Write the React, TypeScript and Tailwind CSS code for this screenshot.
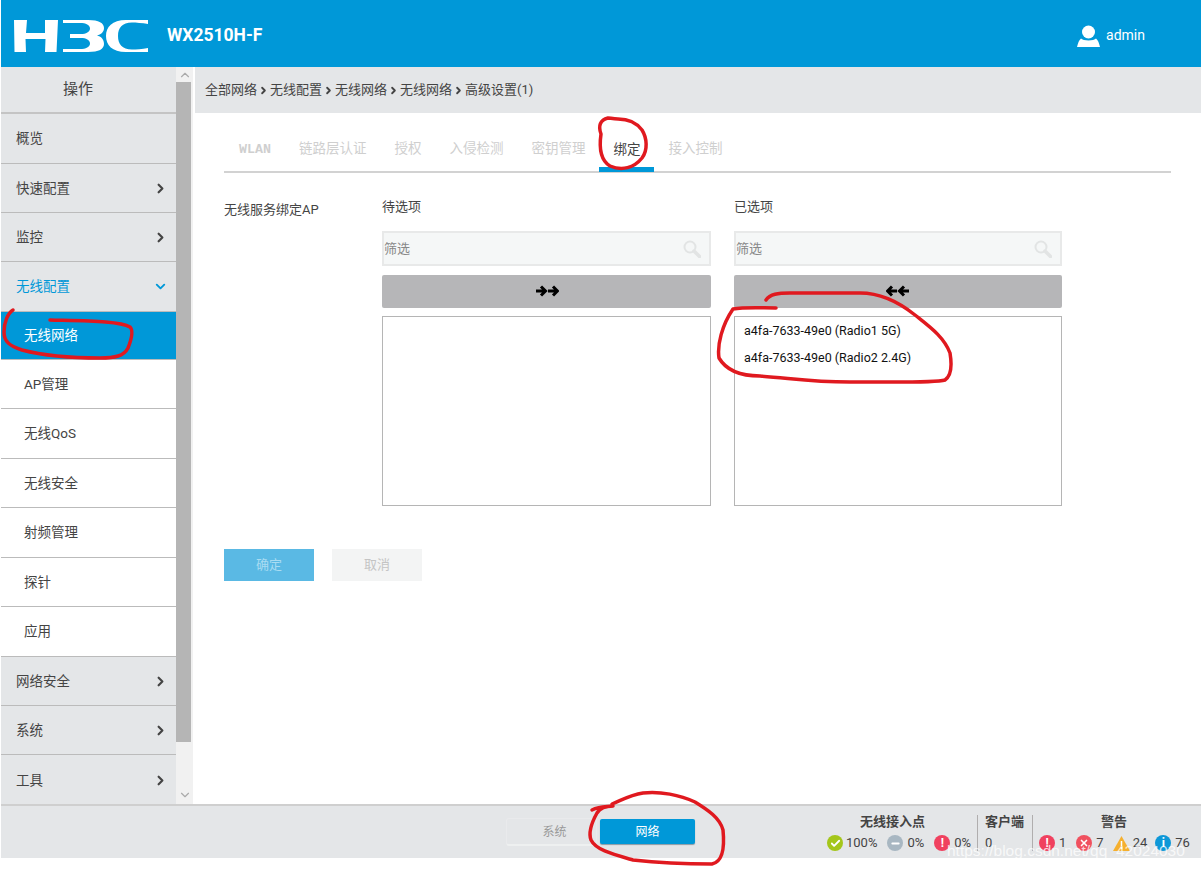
import React from "react";
import { ChevronRight, ChevronDown, ChevronUp, Check, Minus, X } from "lucide-react";

const FONT = "font-['Roboto','Noto_Sans_CJK_SC',sans-serif]";

interface MenuItem {
    label: string;
    kind: "group" | "open" | "sub" | "active";
    h: string;
}

const menu: MenuItem[] = [
    { label: "概览", kind: "group", h: "h-[50px]" },
    { label: "快速配置", kind: "group", h: "h-[49px]" },
    { label: "监控", kind: "group", h: "h-[49px]" },
    { label: "无线配置", kind: "open", h: "h-[50px]" },
    { label: "无线网络", kind: "active", h: "h-[48px]" },
    { label: "AP管理", kind: "sub", h: "h-[49px]" },
    { label: "无线QoS", kind: "sub", h: "h-[50px]" },
    { label: "无线安全", kind: "sub", h: "h-[49px]" },
    { label: "射频管理", kind: "sub", h: "h-[50px]" },
    { label: "探针", kind: "sub", h: "h-[49px]" },
    { label: "应用", kind: "sub", h: "h-[50px]" },
    { label: "网络安全", kind: "group", h: "h-[49px]" },
    { label: "系统", kind: "group", h: "h-[49px]" },
    { label: "工具", kind: "group", h: "h-[52px]" },
];

const tabs = ["WLAN", "链路层认证", "授权", "入侵检测", "密钥管理"];

const Logo = () => (
    <svg width="135" height="34" viewBox="0 0 135 34" className="shrink-0">
        <path fill="#fff" d="M0 1h13l-1 13h19V1h13l-1.500 32H31l.5-13h-20l.5 13H0.500z" />
        <path
            fill="#fff"
            d="M49 1H74C85 1 90 4 90 9C90 13 87 15.500 83 16.500C87 17.500 90 20 90 25C90 30 85 33 74 33H49V30H66C72 30 76 28 76 24.500C76 21 72 19 67 19H56V15H67C72 15 76 13 76 9.500C76 6 72 4 66 4H49Z"
        />
        <path
            fill="#fff"
            d="M134 1H112C98 1 92 8 92 17C92 26 98 33 112 33H134V29C128 30 122 30.500 118 30.500C108 30.500 104 25 104 17C104 9 108 3.500 118 3.500C122 3.500 128 4 134 5Z"
        />
    </svg>
);

const Sidebar = () => (
    <div className="flex h-full w-[194px] shrink-0 bg-[#f1f1f1]">
        <div className="flex w-[175px] shrink-0 flex-col">
            <div className="flex h-[47px] shrink-0 items-center justify-center border-b-2 border-[#c4c4c4] bg-[#e4e6e8] pr-[21px] text-[15px] text-[#444]">
                操作
            </div>
            {menu.map((m) => {
                const base = `flex ${m.h} shrink-0 items-center border-b text-[13.5px] `;
                if (m.kind === "active") {
                    return (
                        <div key={m.label} className={base + "border-[#bbb] bg-[#0098d8] pl-[23px] text-white"}>
                            {m.label}
                        </div>
                    );
                }
                if (m.kind === "sub") {
                    return (
                        <div key={m.label} className={base + "border-[#bbb] bg-white pl-[23px] text-[#444]"}>
                            {m.label}
                        </div>
                    );
                }
                return (
                    <div
                        key={m.label}
                        className={
                            base +
                            "justify-between border-[#bbb] bg-[#e4e6e8] pl-[15px] pr-[8px] " +
                            (m.kind === "open" ? "text-[#0098d8]" : "text-[#444]")
                        }
                    >
                        {m.label}
                        {m.kind === "open" && <ChevronDown size={15} strokeWidth={3} className="text-[#0098d8]" />}
                        {m.kind === "group" && m.label !== "概览" && (
                            <ChevronRight size={15} strokeWidth={3.500} className="text-[#444]" />
                        )}
                    </div>
                );
            })}
        </div>
        <div className="flex w-[17px] shrink-0 flex-col items-center">
            <div className="flex h-[15px] w-full items-center justify-center">
                <ChevronUp size={14} className="text-[#aaa]" />
            </div>
            <div className="h-[660px] w-[15px] self-start bg-[#b5b5b5]" />
            <div className="flex flex-1 items-end pb-[2px]">
                <ChevronDown size={14} className="text-[#aaa]" />
            </div>
        </div>
        <div className="w-[2px] shrink-0 bg-white" />
    </div>
);

const ArrowPair = ({ left }: { left?: boolean }) => (
    <svg width="24" height="12" viewBox="0 0 24 12" className={`mb-[2px] ${left ? "rotate-180" : ""}`}>
        <path d="M1 6h8M6 1.500l4.500 4.500-4.500 4.500M13 6h8M18 1.500l4.500 4.500-4.500 4.500" fill="none" stroke="#000" strokeWidth="3" />
    </svg>
);

const Magnifier = () => (
    <svg width="18" height="18" viewBox="0 0 18 18" fill="none" stroke="#e2e4e4">
        <circle cx="7" cy="7" r="5.500" strokeWidth="2" />
        <path d="M11 11l5.500 5.500" strokeWidth="3.500" strokeLinecap="round" />
    </svg>
);

const Picker = ({ title, left, items, w }: { title: string; left?: boolean; items: string[]; w: string }) => (
    <div className={`flex ${w} flex-col`}>
        <div className="h-[33px] text-[13px] leading-[18px] text-[#444]">{title}</div>
        <div className="flex h-[35px] items-center justify-between border-2 border-[#e8e9e9] bg-[#f5f7f7] pr-2 text-[13px] text-[#888]">
            筛选
            <Magnifier />
        </div>
        <div className="mt-[9px] flex h-[33px] items-center justify-center rounded-[2px] bg-[#b6b6b8]">
            <ArrowPair left={left} />
        </div>
        <div className="mt-[8px] h-[190px] border border-[#b5b5b5] bg-white px-[9px] pt-[4px] text-[12.5px] text-[#111]">
            {items.map((t) => (
                <div key={t} className="h-[27px] leading-[20px]">
                    {t}
                </div>
            ))}
        </div>
    </div>
);

const Main = () => (
    <div className="flex min-w-0 flex-1 flex-col bg-white">
        <div className="flex h-[46px] shrink-0 items-center gap-[1px] bg-[#e4e6e8] pl-[10px] text-[13px] text-[#444]">
            {["全部网络", "无线配置", "无线网络", "无线网络"].map((c, i) => (
                <React.Fragment key={i}>
                    {c}
                    <ChevronRight size={11} strokeWidth={4} className="text-[#444]" />
                </React.Fragment>
            ))}
            高级设置(1)
        </div>
        <div className="ml-[29px] flex h-[60px] w-[947px] shrink-0 items-end border-b-2 border-[#d2d2d2] text-[13.5px] text-[#cfcfcf]">
            {tabs.map((t, i) => (
                <div
                    key={t}
                    className={`flex h-[36px] items-start ${i === 0 ? "pl-[15px] pr-[14px] pt-[2px] font-['Liberation_Mono',monospace] text-[13.3px] font-bold" : "px-[14px]"}`}
                >
                    <span className="leading-[26px]">{t}</span>
                </div>
            ))}
            <div className="-mb-[1px] flex h-[36px] w-[55px] items-start justify-center border-b-[5px] border-[#0098d8] text-[#444]">
                <span className="leading-[26px]">绑定</span>
            </div>
            <div className="flex h-[36px] items-start px-[14px]">
                <span className="leading-[26px]">接入控制</span>
            </div>
        </div>
        <div className="ml-[29px] mt-[25px] flex">
            <div className="w-[158px] pt-[3px] text-[13px] leading-[18px] text-[#444]">无线服务绑定AP</div>
            <div className="flex gap-[23px]">
                <Picker title="待选项" items={[]} w="w-[329px]" />
                <Picker
                    title="已选项"
                    left
                    w="w-[328px]"
                    items={["a4fa-7633-49e0 (Radio1 5G)", "a4fa-7633-49e0 (Radio2 2.4G)"]}
                />
            </div>
        </div>
        <div className="ml-[29px] mt-[43px] flex gap-[18px] text-[13px]">
            <div className="flex h-[32px] w-[90px] items-center justify-center bg-[#5ab9e4] text-[#a9dcf2]">确定</div>
            <div className="flex h-[32px] w-[90px] items-center justify-center bg-[#f3f4f4] text-[#c4c4c4]">取消</div>
        </div>
    </div>
);

const Dot = ({ color, children }: { color: string; children: React.ReactNode }) => (
    <span className={`flex h-[16px] w-[16px] items-center justify-center rounded-full text-white ${color}`}>{children}</span>
);

const Footer = () => (
    <div className="relative flex h-[54px] shrink-0 border-t-2 border-[#cfcfcf] bg-[#e4e6e8]">
        <div className="ml-[505px] mt-[12px] flex h-[28px] w-[91px] items-center justify-center rounded-[3px] border-x border-b-2 border-t border-x-[#e9eaec] border-b-[#eef0f0] border-t-[#e9eaec] pl-[6px] text-[12px] text-[#999]">
            系统
        </div>
        <div className="ml-[3px] mt-[13px] flex h-[25px] w-[95px] items-center justify-center rounded-[2px] bg-[#0098d8] text-[12px] text-white shadow-[0_1px_1px_#8a9aa5]">
            网络
        </div>
        <div className="ml-[132px] flex w-[150px] flex-col pt-[7px]">
            <div className="pl-[33px] text-[13px] font-bold leading-[18px] text-[#444]">无线接入点</div>
            <div className="mt-[4px] flex items-center text-[13px] leading-[16px] text-[#444]">
                <Dot color="bg-[#a4c61a]">
                    <Check size={11} strokeWidth={4} />
                </Dot>
                <span className="ml-[3px]">100%</span>
                <span className="ml-[10px]">
                    <Dot color="bg-[#a8b7c2]">
                        <Minus size={11} strokeWidth={4} />
                    </Dot>
                </span>
                <span className="ml-[4px]">0%</span>
                <span className="ml-[10px]">
                    <Dot color="bg-[#f0415f]">
                        <span className="text-[12px] font-bold leading-none">!</span>
                    </Dot>
                </span>
                <span className="ml-[4px]">0%</span>
            </div>
        </div>
        <div className="mt-[9px] h-[36px] w-px bg-[#b0aeae]" />
        <div className="flex w-[54px] flex-col pl-[7px] pt-[7px]">
            <div className="text-[13px] font-bold leading-[18px] text-[#444]">客户端</div>
            <div className="mt-[4px] text-[13px] leading-[16px] text-[#444]">0</div>
        </div>
        <div className="mt-[9px] h-[36px] w-px bg-[#b0aeae]" />
        <div className="flex flex-1 flex-col pl-[6px] pt-[7px]">
            <div className="pl-[62px] text-[13px] font-bold leading-[18px] text-[#444]">警告</div>
            <div className="mt-[4px] flex items-center text-[13px] leading-[16px] text-[#444]">
                <Dot color="bg-[#f0415f]">
                    <span className="text-[12px] font-bold leading-none">!</span>
                </Dot>
                <span className="ml-[4px]">1</span>
                <span className="ml-[10px]">
                    <Dot color="bg-[#f0515f]">
                        <X size={10} strokeWidth={4} />
                    </Dot>
                </span>
                <span className="ml-[4px]">7</span>
                <svg width="17" height="15" viewBox="0 0 17 15" className="ml-[9px]">
                    <path d="M8.500 0L17 15H0z" fill="#f5b02e" />
                    <path d="M8.500 5v5M8.500 11v2" stroke="#fff" strokeWidth="1.500" />
                </svg>
                <span className="ml-[3px]">24</span>
                <span className="ml-[8px]">
                    <Dot color="bg-[#0e98d8]">
                        <span className="text-[12px] font-bold leading-none">i</span>
                    </Dot>
                </span>
                <span className="ml-[4px]">76</span>
            </div>
        </div>
    </div>
);

const Marks = () => (
    <svg width="1201" height="869" viewBox="0 0 1201 869" className="pointer-events-none absolute left-0 top-0">
        <g fill="none" stroke="#e0191f" strokeWidth="3.500" strokeLinecap="round" strokeLinejoin="round">
            <path d="M608 118C600 120 598 126 601 134C599 148 600 160 610 166C622 171 634 168 642 158C648 150 647 138 642 130C636 122 628 119 618 119C613 119 610 118 608 118Z" />
            <path d="M766 300C770 294 778 293 790 293L860 293C880 293 900 303 915 315C930 327 944 337 950 353C952 365 951 376 945 380C935 383 900 382 850 382C810 382 790 378 760 376C740 376 726 370 719 358C717 345 722 325 733 309C745 307 760 308 776 308" />
            <path d="M13 310C8 313 4 322 4 332C4 342 10 346 22 350C45 356 70 358 100 358C115 358 124 356 128 348C132 338 133 330 130 327C120 321 90 321 50 320" />
            <path d="M592 810C600 806 606 807 613 806M613 806C605 806 600 808 597 813C592 822 588 832 591 840C596 850 612 854 633 860C660 863 690 864 712 864C722 862 725 850 723 830C720 818 708 810 695 802C680 795 660 791 643 793C630 795 622 800 612 804" />
        </g>
    </svg>
);

export default function App() {
    return (
        <div className={`relative h-[869px] w-[1201px] overflow-hidden bg-white pl-px ${FONT}`}>
            <div className="flex h-[67px] items-center bg-[#0098d8] pl-[13px] pr-[56px] pt-[4px]">
                <Logo />
                <div className="ml-[18px] text-[17.5px] font-bold text-white">WX2510H-F</div>
                <div className="ml-auto flex items-center gap-[6px] text-[14px] text-white">
                    <svg width="23" height="22" viewBox="0 0 23 22" fill="#fff">
                        <circle cx="11.500" cy="7" r="6.500" />
                        <path d="M4 13.500C6 16 17 16 19 13.500C21 15 22 18 23 22H0C1 18 2 15 4 13.500Z" />
                    </svg>
                    admin
                </div>
            </div>
            <div className="flex h-[737px] overflow-hidden">
                <Sidebar />
                <Main />
            </div>
            <Footer />
            <Marks />
            <div className="absolute left-[947px] top-[842px] font-['Liberation_Sans',sans-serif] text-[15.500px] leading-[18px] text-white/75">
                https://blog.csdn.net/qq_42024030
            </div>
        </div>
    );
}
